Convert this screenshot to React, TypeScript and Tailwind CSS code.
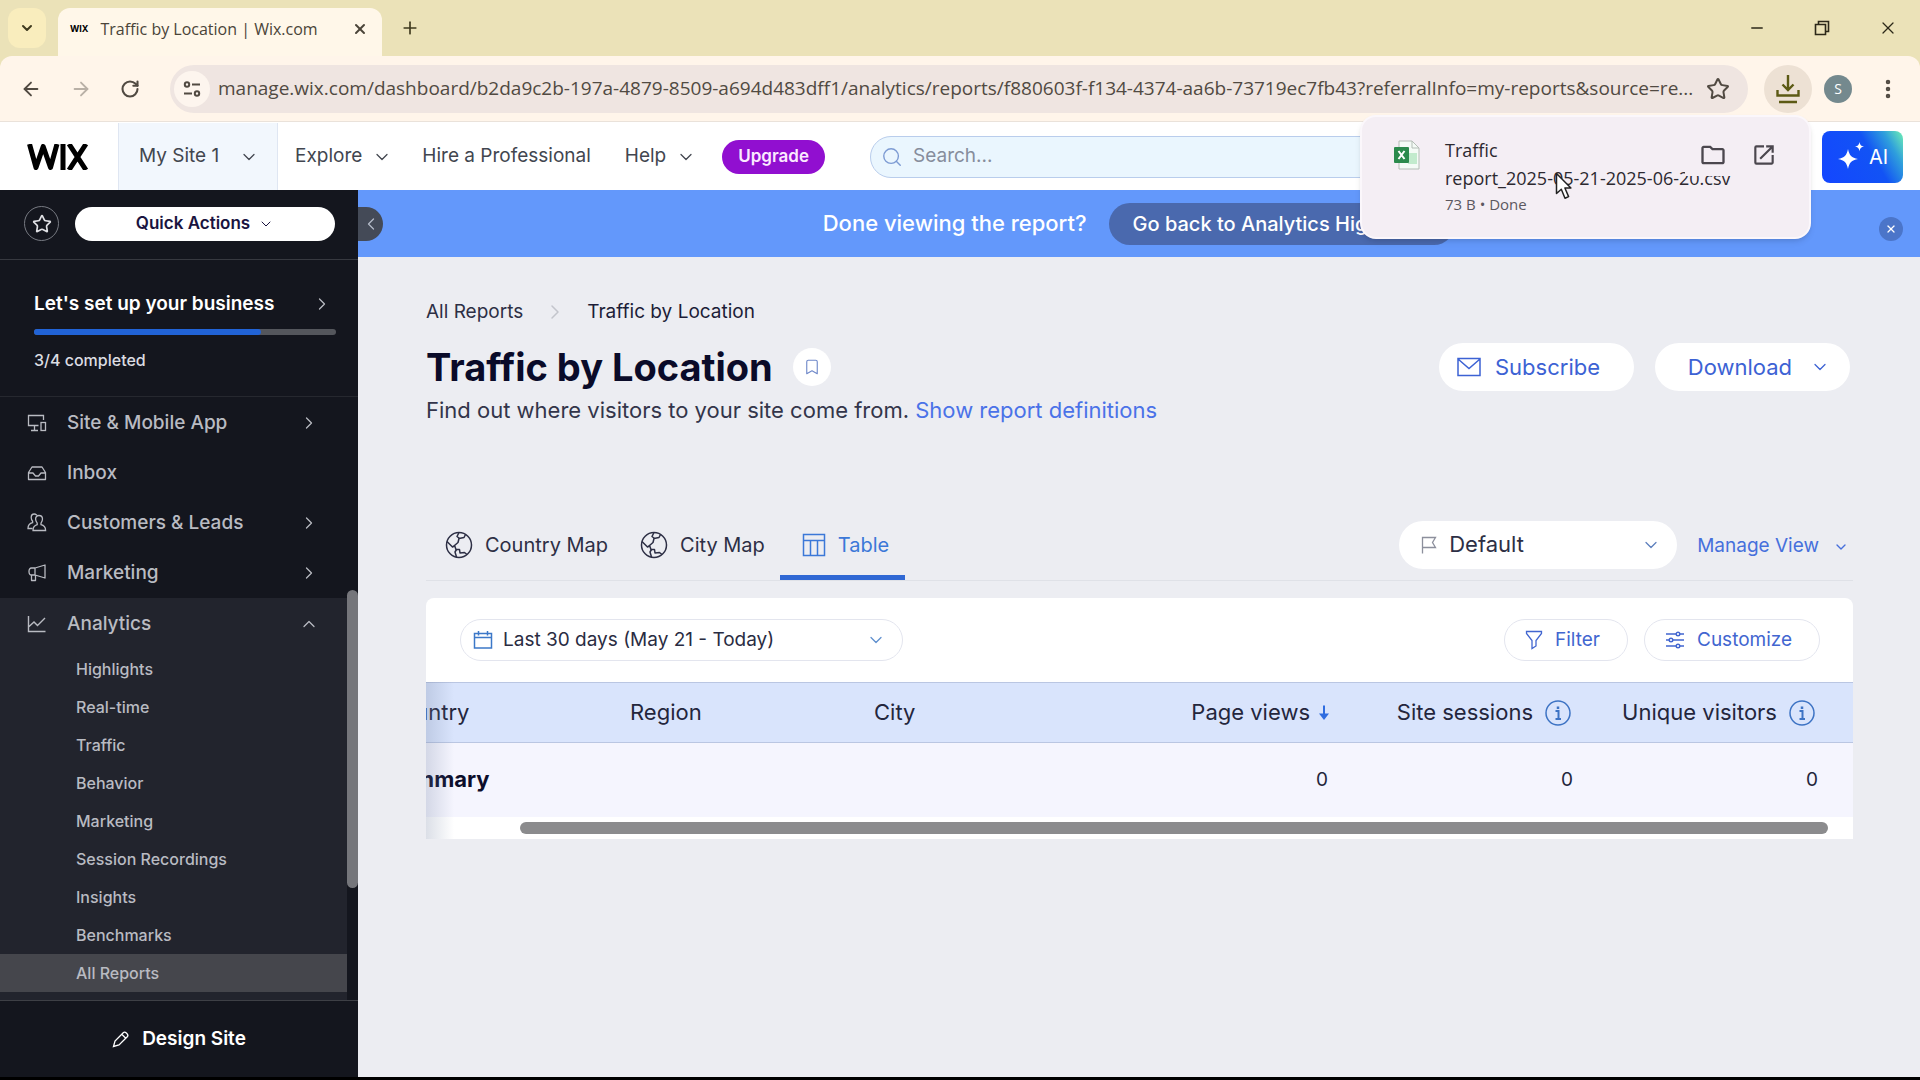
import type { ReactNode } from 'react';
import {
  ArrowLeft,
  ArrowRight,
  Bookmark,
  ChevronDown,
  ChevronLeft,
  ChevronRight,
  ChevronUp,
  EllipsisVertical,
  Minus,
  Plus,
  RotateCw,
  Search,
  Star,
  X,
} from 'lucide-react';
import { MdOutlineFolder, MdOutlineOpenInNew } from 'react-icons/md';

const URL_TEXT =
  'manage.wix.com/dashboard/b2da9c2b-197a-4879-8509-a694d483dff1/analytics/reports/f880603f-f134-4374-aa6b-73719ec7fb43?referralInfo=my-reports&source=re...';

const ANALYTICS_LINKS = [
  'Highlights',
  'Real-time',
  'Traffic',
  'Behavior',
  'Marketing',
  'Session Recordings',
  'Insights',
  'Benchmarks',
  'All Reports',
];

function DevicesIcon() {
  return (
    <svg width="20" height="20" viewBox="0 0 20 20" fill="none" stroke="currentColor" strokeWidth="1.3">
      <path d="M11.5 12.5H1.5V2.5H16.5V7M7.5 12.5V17M4 17.5H11" />
      <rect x="14" y="9.5" width="4.5" height="8" />
    </svg>
  );
}

function InboxIcon() {
  return (
    <svg width="20" height="20" viewBox="0 0 20 20" fill="none" stroke="currentColor" strokeWidth="1.3" strokeLinejoin="round">
      <path d="M1.500 16.500V9.500L5 4H15L18.500 9.500V16.500zM1.500 10H6l2.500 3h3L14 10h4.500" />
    </svg>
  );
}

function PeopleIcon() {
  return (
    <svg width="20" height="20" viewBox="0 0 20 20" fill="none" stroke="currentColor" strokeWidth="1.3">
      <path d="M12 2.5c2.200 0 3.500 1.500 3.500 3.600 0 1.800-.8 3.100-1.500 4v1.600c2.500.6 4.600 1.400 4.600 5.800H6c0-4.400 2-5.200 4.200-5.800v-1.600c-.8-.9-1.600-2.200-1.600-4 0-2.100 1.200-3.600 3.400-3.600z" />
      <path d="M10 2.200C9 1.500 8 1 7.200 1 5.300 1 4.200 2.500 4.200 4.500c0 1.700.7 2.900 1.400 3.700v1.500C3 10.300 1 11.600 1 15.500h4.500" />
    </svg>
  );
}

function MegaphoneIcon() {
  return (
    <svg width="20" height="20" viewBox="0 0 20 20" fill="none" stroke="currentColor" strokeWidth="1.3" strokeLinejoin="round">
      <path d="M8 5L18 2v13L8 12zM8 5H4.500C3 5 2 6.200 2 8.500S3 12 4.500 12H8M4.500 12v5.500h4V12" />
    </svg>
  );
}

function ChartIcon() {
  return (
    <svg width="20" height="20" viewBox="0 0 20 20" fill="none" stroke="currentColor" strokeWidth="1.4">
      <path d="M1.500 2V17.500H18.500M1.500 13L7 8l3.500 3.500L18 4" />
    </svg>
  );
}

function PencilIcon() {
  return (
    <svg width="18" height="18" viewBox="0 0 18 18" fill="none" stroke="currentColor" strokeWidth="1.3">
      <path d="M1.500 16.500L3 11l8.500-8.500c1.500-1.500 5.500 2.300 4 4L7 15l-5.500 1.500zM10 4.500l3.800 3.700" />
    </svg>
  );
}

function GlobeIcon() {
  return (
    <svg width="28" height="28" viewBox="0 0 28 28" fill="none" stroke="currentColor" strokeWidth="1.5" strokeLinejoin="round">
      <circle cx="14" cy="14" r="12.500" />
      <path d="M20.500 3.500L19 6.500l-5 1-1 4-3.500 3 1.500 4h3.500l.5 3.500 4.500-.5 2.500 2" />
      <path d="M2 10.500l5.500 5.500 2.500-1.500M11.500 18.500L10 21l1.500 5M14.500 7.500L12 5.500l2-4" />
    </svg>
  );
}

function TableIcon() {
  return (
    <svg width="24" height="24" viewBox="0 0 24 24" fill="none" stroke="currentColor" strokeWidth="1.500">
      <path d="M1.500 1.500h21v21h-21zM1.500 7.500h21M8.500 7.500v15M15.500 7.500v15" />
    </svg>
  );
}

function MailIcon() {
  return (
    <svg width="24" height="20" viewBox="0 0 24 20" fill="none" stroke="currentColor" strokeWidth="1.500">
      <path d="M1 1.500h22v17H1zM1 2l11 9.500L23 2" />
    </svg>
  );
}

function FlagIcon() {
  return (
    <svg width="16" height="18" viewBox="0 0 16 18" fill="none" stroke="currentColor" strokeWidth="1.300">
      <path d="M1.500 17.500V1.500H14.500L11.500 6.500L14.500 11.500H1.500" />
    </svg>
  );
}

function CalendarIcon() {
  return (
    <svg width="20" height="20" viewBox="0 0 20 20" fill="none" stroke="currentColor" strokeWidth="1.500">
      <path d="M1.500 3.500h17v14.500h-17zM1.500 7.500h17M5.500 1v4.500M14.500 1v4.500" />
    </svg>
  );
}

function FunnelIcon() {
  return (
    <svg width="18" height="20" viewBox="0 0 18 20" fill="none" stroke="currentColor" strokeWidth="1.300">
      <path d="M1.500 1.500h15v2L11 10.500V16l-4 2.500v-8L1.500 3.500z" />
    </svg>
  );
}

function SlidersIcon() {
  return (
    <svg width="20" height="18" viewBox="0 0 20 18" fill="none" stroke="currentColor" strokeWidth="1.400">
      <path d="M1 3h10M15 3h4M1 9h3M8 9h11M1 15h10M15 15h4" />
      <circle cx="13" cy="3" r="1.800" />
      <circle cx="6" cy="9" r="1.800" />
      <circle cx="13" cy="15" r="1.800" />
    </svg>
  );
}

function SortIcon() {
  return (
    <svg width="12" height="16" viewBox="0 0 12 16" fill="none" stroke="#2f6ce0">
      <path d="M6 0.500V12" strokeWidth="2" />
      <path d="M1 8.500h10L6 15z" fill="#2f6ce0" stroke="none" />
    </svg>
  );
}

function InfoIcon() {
  return (
    <svg width="26" height="26" viewBox="0 0 26 26" fill="none" stroke="#3d73c4" strokeWidth="1.500">
      <circle cx="13" cy="13" r="12" />
      <path d="M10.500 11H13.500V19M10.500 19H16" strokeWidth="2" />
      <path d="M13 6.500v2.500" strokeWidth="2.500" />
    </svg>
  );
}

function TabStrip() {
  return (
    <div className="flex h-14 bg-[#ebe2b8] pl-2 text-[#3f3a1e]">
      <button aria-label="Search tabs" className="mt-2 flex h-10 w-[38px] items-center justify-center rounded-xl bg-[#f9edbd]">
        <ChevronDown className="h-4 w-4" strokeWidth={3} />
      </button>
      <div className="mt-2 ml-3 flex h-12 w-[324px] items-center rounded-t-xl bg-[#fff7e9] pr-2.5 pb-1.5 pl-3 font-['Open_Sans',sans-serif] text-[#4a4438]">
        <span className="font-['Inter',sans-serif] text-[9px] font-bold text-black">WIX</span>
        <span className="ml-3 flex-1 text-base whitespace-nowrap">Traffic by Location | Wix.com</span>
        <button aria-label="Close tab" className="p-1">
          <X className="h-4 w-4" strokeWidth={3} />
        </button>
      </div>
      <button aria-label="New tab" className="ml-[18px]">
        <Plus className="h-5 w-5" strokeWidth={2} />
      </button>
      <div className="ml-auto flex items-center gap-12 pr-[22px] text-[#2c2818]">
        <button aria-label="Minimize">
          <Minus className="h-[18px] w-[18px]" strokeWidth={1.75} />
        </button>
        <button aria-label="Restore">
          <svg width="16" height="16" viewBox="0 0 16 16" fill="none" stroke="currentColor" strokeWidth="1.600">
            <path d="M1.500 4.500h10v10h-10zM4.500 4V1.500h10v10H12" />
          </svg>
        </button>
        <button aria-label="Close window">
          <X className="h-5 w-5" strokeWidth={1.5} />
        </button>
      </div>
    </div>
  );
}

function AddressBar() {
  return (
    <div className="bg-[#ebe2b8]">
      <div className="flex h-[66px] items-center rounded-t-xl border-b border-[#eae2da] bg-[#fff5ea] pr-5 pl-5 text-[#514a42]">
        <button aria-label="Back">
          <ArrowLeft className="h-[22px] w-[22px]" />
        </button>
        <button aria-label="Forward" className="ml-7 text-[#b9b0a6]">
          <ArrowRight className="h-[22px] w-[22px]" />
        </button>
        <button aria-label="Reload" className="ml-7">
          <RotateCw className="h-5 w-5" strokeWidth={2.5} />
        </button>
        <div className="ml-[30px] flex h-12 flex-1 items-center rounded-full bg-[#efe5e1] pr-[18px] pl-1">
          <button aria-label="View site information" className="flex h-9 w-9 items-center justify-center rounded-full bg-[#fdf5ee]">
            <svg width="18" height="18" viewBox="0 0 18 18" fill="none" stroke="currentColor" strokeWidth="2">
              <circle cx="4" cy="4.500" r="2.200" />
              <circle cx="14" cy="13.500" r="2.200" />
              <path d="M9 4.500h8M1 13.500h8" />
            </svg>
          </button>
          <input
            aria-label="Address"
            readOnly
            value={URL_TEXT}
            className="mr-1 min-w-0 flex-1 bg-transparent pl-2 font-['Open_Sans',sans-serif] text-[19px] outline-none"
          />
          <button aria-label="Bookmark this tab">
            <Star className="h-6 w-6" strokeWidth={2} />
          </button>
        </div>
        <button aria-label="Downloads" className="ml-4 flex h-12 w-12 items-center justify-center rounded-full bg-[#ede1d4] text-[#5c5a14]">
          <svg width="24" height="32" viewBox="0 0 24 32" fill="none" stroke="currentColor" strokeWidth="2.400">
            <path d="M12 2v15M6.500 11.500L12 17l5.500-5.500M1.500 17v5.500h21V17M3 29h18" />
          </svg>
        </button>
        <button aria-label="Profile" className="ml-3 flex h-7 w-7 items-center justify-center rounded-full bg-[#74898e] font-['Open_Sans',sans-serif] text-sm text-white">
          S
        </button>
        <button aria-label="Menu" className="ml-6">
          <EllipsisVertical className="h-6 w-6" strokeWidth={2.5} />
        </button>
      </div>
    </div>
  );
}

function Header() {
  return (
    <header className="flex h-[68px] items-center bg-white pt-px text-[19px] text-[#42464f]">
      <a href="#" aria-label="Wix home" className="flex w-[118px] shrink-0 pl-[27px]">
        <svg width="62" height="26" viewBox="0 0 62 26" fill="none" stroke="#000" strokeWidth="5">
          <path d="M2.500 0L9 23.500 16.200 2.500 23.500 23.500 30 0" strokeLinejoin="round" />
          <path d="M36 0v26M42 0l17 26M59 0L42 26" />
        </svg>
      </a>
      <button className="flex h-full w-[160px] shrink-0 items-center justify-between border-x border-[#dfe6f2] bg-[#f2f7fd] pr-[18px] pl-5">
        My Site 1
        <ChevronDown className="h-5 w-5" strokeWidth={1.5} />
      </button>
      <button className="ml-[17px] flex items-center gap-2.5 whitespace-nowrap">
        Explore
        <ChevronDown className="h-5 w-5" strokeWidth={1.5} />
      </button>
      <a href="#" className="ml-[30px] whitespace-nowrap">
        Hire a Professional
      </a>
      <button className="ml-[34px] flex items-center gap-2.5">
        Help
        <ChevronDown className="h-5 w-5" strokeWidth={1.5} />
      </button>
      <button className="ml-[26px] h-[34px] rounded-full bg-[#910fd0] px-4 text-[17px] font-semibold text-[#fbe9ff]">Upgrade</button>
      <div className="ml-[45px] flex h-[42px] flex-1 items-center rounded-full border border-[#b9cdec] bg-[#eaf6fe] pl-2.5">
        <Search className="h-[22px] w-[22px] text-[#7d9bd3]" strokeWidth={1.5} />
        <input aria-label="Search" placeholder="Search..." className="ml-2.5 min-w-0 flex-1 bg-transparent outline-none placeholder:text-[#868d9c]" />
      </div>
      <button className="mr-[17px] ml-4 flex h-[52px] w-[81px] items-center justify-center gap-1 rounded-lg bg-[linear-gradient(60deg,#1446ff_0%,#1253f5_60%,#2f9fdc_82%,#6ff0b4_100%)] text-xl text-white">
        <svg width="28" height="32" viewBox="0 0 28 32" fill="currentColor">
          <path d="M11 8c1.300 6.500 3.500 8.700 10 10-6.500 1.300-8.700 3.500-10 10-1.300-6.500-3.500-8.700-10-10 6.500-1.300 8.700-3.500 10-10z" />
          <path d="M22.500 1c.6 3 1.500 4 4.500 4.600-3 .6-3.900 1.600-4.500 4.600-.6-3-1.500-4-4.500-4.600 3-.6 3.900-1.600 4.500-4.600z" />
        </svg>
        AI
      </button>
    </header>
  );
}

function NavItem({ icon, label, expandable = true }: { icon: ReactNode; label: string; expandable?: boolean }) {
  return (
    <a href="#" className="flex h-[50px] items-center pr-7 pl-[27px] text-[19px]">
      <span className="flex w-10">{icon}</span>
      <span className="flex-1">{label}</span>
      {expandable && <ChevronRight className="h-5 w-5" strokeWidth={1.5} />}
    </a>
  );
}

function Sidebar() {
  return (
    <aside className="flex w-[358px] shrink-0 flex-col bg-[#14161e] font-medium text-[#b9bbc2]">
      <div className="flex h-[70px] items-center gap-4 border-b border-[#373940] pr-[23px] pb-0.5 pl-6">
        <button aria-label="Favorites" className="flex h-[35px] w-[35px] shrink-0 items-center justify-center rounded-full border border-[#777a82] text-[#e0e1e5]">
          <Star className="h-5 w-5" strokeWidth={2} />
        </button>
        <button className="flex h-[34px] flex-1 items-center justify-center gap-2 rounded-full bg-white text-[17px] font-semibold text-[#1a1440]">
          Quick Actions
          <ChevronDown className="h-4 w-4" strokeWidth={1.5} />
        </button>
      </div>

      <div className="h-[137px] border-b border-[#26282f] pt-7 pr-[22px] pl-[34px]">
        <a href="#" className="flex h-8 items-center justify-between pr-1 text-[19px] font-semibold text-white">
          Let's set up your business
          <ChevronRight className="h-5 w-5 text-[#b9bbc2]" strokeWidth={1.5} />
        </a>
        <div className="mt-[9px] h-1.5 rounded-full bg-[#54565c]">
          <div className="h-1.5 w-3/4 rounded-full bg-[#2163d6]" />
        </div>
        <p className="mt-[13px] text-base leading-6 text-[#dcdde2]">3/4 completed</p>
      </div>

      <div className="flex flex-1">
        <nav className="flex flex-1 flex-col pt-px">
          <NavItem icon={<DevicesIcon />} label="Site & Mobile App" />
          <NavItem icon={<InboxIcon />} label="Inbox" expandable={false} />
          <NavItem icon={<PeopleIcon />} label="Customers & Leads" />
          <NavItem icon={<MegaphoneIcon />} label="Marketing" />
          <div className="flex-1 bg-[#22242d]">
            <a href="#" className="flex h-[52px] items-center pr-7 pl-[27px] text-[19px]">
              <span className="w-10">
                <ChartIcon />
              </span>
              <span className="flex-1">Analytics</span>
              <ChevronUp className="h-5 w-5" strokeWidth={1.5} />
            </a>
            {ANALYTICS_LINKS.map((label) => (
              <a
                key={label}
                href="#"
                className={`flex h-[38px] items-center pl-[76px] text-base ${label === 'All Reports' ? 'bg-[#45464c]' : ''}`}
              >
                {label}
              </a>
            ))}
          </div>
        </nav>
        <div className="w-[11px] pt-[193px]">
          <div className="h-[298px] rounded-full bg-[#75767b]" />
        </div>
      </div>

      <a href="#" className="flex h-[77px] items-center justify-center gap-3 border-t border-[#3e4046] text-[19px] font-semibold text-white">
        <PencilIcon />
        Design Site
      </a>
    </aside>
  );
}

function Banner() {
  return (
    <div className="relative flex h-[67px] items-center justify-center gap-[22px] bg-[#6398fb] text-white">
      <button aria-label="Collapse sidebar" className="absolute left-0 flex h-[34px] w-[25px] items-center justify-center rounded-r-full bg-[#444a57] text-[#b4bac8]">
        <ChevronLeft className="h-5 w-5" strokeWidth={1.5} />
      </button>
      <span className="text-[22px] font-medium">Done viewing the report?</span>
      <button className="h-[42px] rounded-full bg-[#4a69ae] px-6 text-xl font-medium">Go back to Analytics Highlights</button>
      <button aria-label="Dismiss" className="absolute right-[17px] bottom-4 flex h-6 w-6 items-center justify-center rounded-full bg-[#4b75c9]">
        <X className="h-3 w-3" strokeWidth={2.5} />
      </button>
    </div>
  );
}

function ReportHeading() {
  return (
    <>
      <nav className="flex h-[26px] items-center text-[19px] text-[#2d2f45]">
        <a href="#">All Reports</a>
        <ChevronRight className="mx-5 h-6 w-6 text-[#c3c5cc]" strokeWidth={1.5} />
        <span className="text-[#1c1d38]">Traffic by Location</span>
      </nav>
      <div className="mt-[18px] flex h-12 items-center">
        <h1 className="text-[38px] font-bold text-[#0a0b29]">Traffic by Location</h1>
        <button aria-label="Save report" className="ml-5 flex h-[38px] w-[38px] items-center justify-center rounded-full bg-white text-[#6f88c9]">
          <Bookmark className="h-[18px] w-[18px]" strokeWidth={1.5} />
        </button>
        <button className="ml-auto flex h-12 w-[195px] items-center gap-3.5 rounded-full bg-white pl-[18px] text-[22px] text-[#3c62d4]">
          <MailIcon />
          Subscribe
        </button>
        <button className="mr-[3px] ml-[21px] flex h-12 w-[195px] items-center justify-end gap-[18px] rounded-full bg-white pr-5 text-[22px] text-[#3c62d4]">
          Download
          <ChevronDown className="h-5 w-5" strokeWidth={1.5} />
        </button>
      </div>
      <p className="mt-[5px] text-[22px] leading-7 text-[#33354a]">
        Find out where visitors to your site come from.{' '}
        <a href="#" className="text-[#4a72e8]">
          Show report definitions
        </a>
      </p>
    </>
  );
}

function ViewTabs() {
  return (
    <div className="mt-[85px] flex h-[72px] items-center border-b border-[#dfe1e7] text-xl text-[#2d2f45]">
      <div role="tablist" className="flex h-full">
        <button role="tab" aria-selected="false" className="flex items-center gap-3 pr-4 pl-[19px]">
          <GlobeIcon />
          Country Map
        </button>
        <button role="tab" aria-selected="false" className="flex items-center gap-3 pr-[15px] pl-4">
          <GlobeIcon />
          City Map
        </button>
        <button role="tab" aria-selected="true" className="flex items-center gap-3 border-b-5 border-[#3068d4] pt-[5px] pr-4 pl-[22px] text-[#3b78d8]">
          <TableIcon />
          Table
        </button>
      </div>
      <label className="ml-auto flex h-12 w-[278px] items-center rounded-full bg-white pr-4 pl-[22px] text-[22px]">
        <span className="text-[#8c8f9c]">
          <FlagIcon />
        </span>
        <select aria-label="View" className="flex-1 appearance-none bg-transparent pl-3 outline-none">
          <option>Default</option>
        </select>
        <ChevronDown className="h-5 w-5 text-[#5d7fbd]" strokeWidth={1.5} />
      </label>
      <button className="ml-5 flex items-center gap-3.5 pt-1 pr-1 text-[19px] text-[#4670dc]">
        Manage View
        <ChevronDown className="h-4 w-4" strokeWidth={2} />
      </button>
    </div>
  );
}

function ReportTable() {
  return (
    <section className="mt-[17px] overflow-hidden rounded-t-lg bg-white">
      <div className="flex h-[84px] items-center gap-4 pr-[33px] pl-[34px] text-[19px]">
        <label className="mr-auto flex h-[42px] w-[443px] items-center rounded-full border border-[#e3e5ee] pr-4 pl-3 text-[#2a2c42]">
          <span className="text-[#3c78c8]">
            <CalendarIcon />
          </span>
          <select aria-label="Date range" className="flex-1 appearance-none bg-transparent pl-2.5 outline-none">
            <option>Last 30 days (May 21 - Today)</option>
          </select>
          <ChevronDown className="h-5 w-5 text-[#5f8fce]" strokeWidth={1.5} />
        </label>
        <button className="flex h-[42px] w-[124px] items-center gap-3 rounded-full border border-[#e3e5ee] pl-5 text-[#4266d0]">
          <FunnelIcon />
          Filter
        </button>
        <button className="flex h-[42px] w-[176px] items-center gap-3 rounded-full border border-[#e3e5ee] pl-5 text-[#4266d0]">
          <SlidersIcon />
          Customize
        </button>
      </div>

      <div className="relative overflow-hidden">
        {/* scrolled sideways, so the first column starts outside the card */}
        <div className="ml-[-64px]">
          <table className="w-full table-fixed text-[22px] text-[#24263c]">
            <colgroup>
              <col className="w-[244px]" />
              <col className="w-[244px]" />
              <col />
              <col className="w-[245px]" />
              <col className="w-[245px]" />
              <col className="w-[256px]" />
            </colgroup>
            <thead>
              <tr className="h-[60px] border-y border-[#bac6e2] bg-[#d9e4fc] text-left">
                <th className="pl-6 font-normal">Country</th>
                <th className="pl-6 font-normal">Region</th>
                <th className="pl-6 font-normal">City</th>
                <th className="pr-[22px] font-normal">
                  <span className="flex items-center justify-end gap-2">
                    Page views
                    <SortIcon />
                  </span>
                </th>
                <th className="pr-[26px] font-normal">
                  <span className="flex items-center justify-end gap-3">
                    Site sessions
                    <InfoIcon />
                  </span>
                </th>
                <th className="pr-[38px] font-normal">
                  <span className="flex items-center justify-end gap-3">
                    Unique visitors
                    <InfoIcon />
                  </span>
                </th>
              </tr>
            </thead>
            <tbody>
              <tr className="h-[74px] bg-[#f5f5fe]">
                <th className="pl-6 text-left font-bold text-[#0c0d2b]">Summary</th>
                <td />
                <td />
                <td className="pr-6 text-right text-[19px]">0</td>
                <td className="pr-6 text-right text-[19px]">0</td>
                <td className="pr-[35px] text-right text-[19px]">0</td>
              </tr>
            </tbody>
          </table>
        </div>
        <div className="flex h-[22px] items-center pr-[25px] pl-[94px]">
          <div className="h-3 flex-1 rounded-full bg-[#8b8b8d]" />
        </div>
        <div className="absolute inset-y-0 left-0 w-7 bg-linear-to-r from-[#7080a0]/25 to-transparent" />
      </div>
    </section>
  );
}

function DownloadBubble() {
  return (
    <div className="absolute top-[115px] right-[109px] flex h-[124px] w-[451px] rounded-2xl border-2 border-[#fbf7fb] bg-[#f4eef4] pt-[19px] pl-8 font-['Open_Sans',sans-serif] text-[#2c2930] shadow-md">
      <svg width="26" height="30" viewBox="0 0 26 30" className="mt-1 shrink-0">
        <path d="M5 1h13l7 7v21H5z" fill="#f4fbf6" stroke="#b4bdb6" />
        <path d="M18 1v7h7" fill="none" stroke="#b4bdb6" />
        <path d="M14 13h9v11h-9z" fill="#c2ebcd" />
        <rect y="7" width="15" height="16" rx="1" fill="#2b8a4c" />
        <path d="M4.500 11l6 8M10.500 11l-6 8" stroke="#fff" strokeWidth="2" />
      </svg>
      <div className="ml-[25px]">
        <p className="text-lg leading-7 font-medium whitespace-nowrap">
          Traffic
          <br />
          report_2025-05-21-2025-06-20.csv
        </p>
        <p className="text-[15px] leading-6 text-[#5c5860]">73 B • Done</p>
      </div>
      <div className="absolute top-4 right-5 flex h-[43px] w-[104px] items-center justify-between bg-[#f4eef4] pr-3 pl-3.5 text-[#4b474e]">
        <button aria-label="Show in folder">
          <MdOutlineFolder className="h-7 w-7" />
        </button>
        <button aria-label="Open">
          <MdOutlineOpenInNew className="h-[26px] w-[26px]" />
        </button>
      </div>
      <svg width="18" height="28" viewBox="0 0 18 28" className="absolute top-[55px] left-[193px]">
        <path d="M1.500 1.500v20l4.800-4.300 3.700 9 3.600-1.600-3.700-8.600h6z" fill="#fff" stroke="#222" strokeWidth="1.500" strokeLinejoin="round" />
      </svg>
    </div>
  );
}

export default function App() {
  return (
    <div className="relative flex min-h-screen flex-col border-b-3 border-black bg-[#ecedf2] font-['Inter',sans-serif]">
      <TabStrip />
      <AddressBar />
      <Header />
      <div className="flex flex-1">
        <Sidebar />
        <main className="min-w-0 flex-1">
          <Banner />
          <div className="pt-[42px] pr-[67px] pl-[68px]">
            <ReportHeading />
            <ViewTabs />
            <ReportTable />
          </div>
        </main>
      </div>
      <DownloadBubble />
    </div>
  );
}
